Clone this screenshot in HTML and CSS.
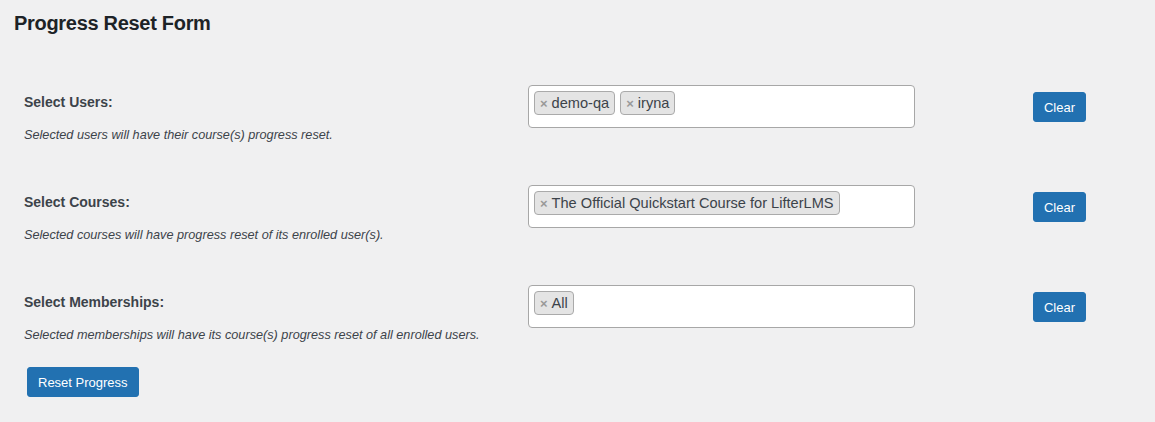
FILE: index.html
```html
<!DOCTYPE html>
<html>
<head>
<meta charset="utf-8">
<link rel="stylesheet" href="styles.css">
</head>
<body>
<div class="wrap">
  <h1 class="title">Progress Reset Form</h1>
  <div class="form">
    <div class="row">
      <div class="label-cell">
        <div class="label">Select Users:</div>
        <div class="desc">Selected users will have their course(s) progress reset.</div>
      </div>
      <div class="select">
        <span class="tag"><span class="x">×</span>demo-qa</span>
        <span class="tag"><span class="x">×</span>iryna</span>
      </div>
      <div class="btn-cell"><button class="btn">Clear</button></div>
    </div>
    <div class="row">
      <div class="label-cell">
        <div class="label">Select Courses:</div>
        <div class="desc">Selected courses will have progress reset of its enrolled user(s).</div>
      </div>
      <div class="select">
        <span class="tag"><span class="x">×</span>The Official Quickstart Course for LifterLMS</span>
      </div>
      <div class="btn-cell"><button class="btn">Clear</button></div>
    </div>
    <div class="row">
      <div class="label-cell">
        <div class="label">Select Memberships:</div>
        <div class="desc">Selected memberships will have its course(s) progress reset of all enrolled users.</div>
      </div>
      <div class="select">
        <span class="tag"><span class="x">×</span>All</span>
      </div>
      <div class="btn-cell"><button class="btn">Clear</button></div>
    </div>
    <div class="submit"><button class="btn btn-reset">Reset Progress</button></div>
  </div>
</div>
</body>
</html>
```

FILE: styles.css
```css
html, body {
  margin: 0;
  padding: 0;
  background: #f0f0f1;
  font-family: "Liberation Sans", Arial, sans-serif;
  color: #3c434a;
}
.wrap {
  padding: 0 0 0 14px;
}
.title {
  margin: 0;
  padding-top: 11px;
  font-size: 20px;
  line-height: 24px;
  font-weight: 700;
  letter-spacing: -0.3px;
  color: #1d2327;
}
.form {
  padding: 50px 0 0 10px;
}
.row {
  display: grid;
  grid-template-columns: 504px 387px 171px;
  height: 100px;
}
.label-cell {
  padding-top: 9px;
}
.label {
  font-size: 14px;
  font-weight: 700;
  line-height: 16px;
  color: #3c434a;
}
.desc {
  margin-top: 17px;
  font-size: 12.7px;
  font-style: italic;
  line-height: 16px;
  color: #3c434a;
}
.select {
  box-sizing: border-box;
  height: 43px;
  background: #fff;
  border: 1px solid #a7a7a7;
  border-radius: 4px;
  padding: 5px 5px;
  display: flex;
  align-items: flex-start;
  gap: 5px;
}
.tag {
  box-sizing: border-box;
  height: 24px;
  display: inline-flex;
  align-items: center;
  background: #e4e4e4;
  border: 1px solid #aaa;
  border-radius: 4px;
  padding: 0 5px 0 5px;
  font-size: 14.6px;
  color: #3c434a;
}
.x {
  color: #999;
  font-weight: 700;
  font-size: 13px;
  margin-right: 4px;
}
.btn-cell {
  display: flex;
  justify-content: flex-end;
  align-items: flex-start;
  padding-top: 7px;
}
.btn {
  box-sizing: border-box;
  height: 30px;
  background: #2271b1;
  border: 1px solid #2271b1;
  border-radius: 3px;
  color: #fff;
  font-family: "Liberation Sans", Arial, sans-serif;
  font-size: 13px;
  padding: 0 10px;
  cursor: pointer;
}
.submit {
  margin-top: -18px;
  padding-left: 3px;
}
.btn-reset {
  padding: 0 10px;
}
```
